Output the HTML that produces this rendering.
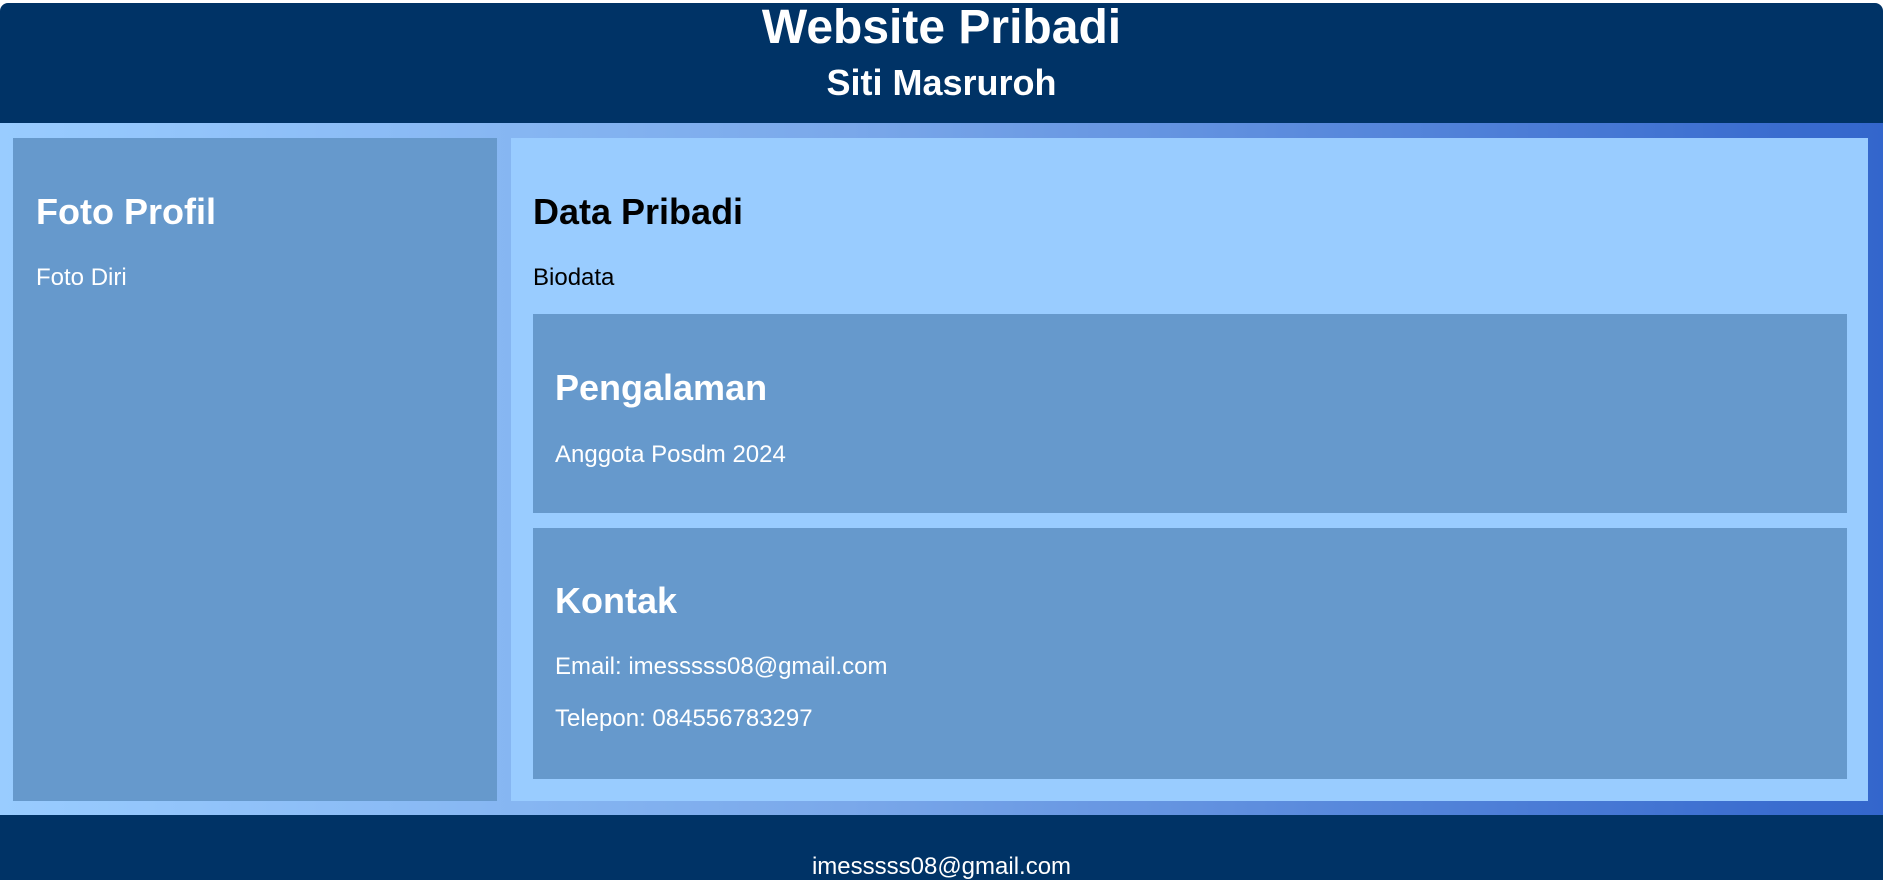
<!DOCTYPE html>
<html><head><meta charset="utf-8"><style>
html,body{margin:0;padding:0;width:1885px;height:880px;overflow:hidden;background:#fff;font-family:"Liberation Sans",Arial,sans-serif;}
div{position:absolute;box-sizing:border-box}
.t{white-space:nowrap;line-height:1;margin:0}
.b{font-weight:bold}
</style></head><body>
<div style="left:0;top:3px;width:1883px;height:121px;background:#003366;border-radius:8px 8px 0 0"></div>
<div style="left:0;top:123px;width:1883px;height:692px;background:linear-gradient(to right,#99ccff 0%,#7aa8ea 45%,#3366cc 100%)"></div>
<div style="left:13px;top:138px;width:484px;height:663px;background:#6699cc"></div>
<div style="left:511px;top:138px;width:1357px;height:663px;background:#99ccff"></div>
<div style="left:533px;top:314px;width:1314px;height:199px;background:#6699cc"></div>
<div style="left:533px;top:528px;width:1314px;height:251px;background:#6699cc"></div>
<div style="left:0;top:815px;width:1883px;height:65px;background:#003366"></div>

<div class="t b" style="left:0;width:1883px;text-align:center;top:4px;font-size:48px;color:#fff">Website Pribadi</div>
<div class="t b" style="left:0;width:1883px;text-align:center;top:65px;font-size:36px;color:#fff">Siti Masruroh</div>

<div class="t b" style="left:36px;top:194px;font-size:36px;color:#fff">Foto Profil</div>
<div class="t" style="left:36px;top:266px;font-size:24px;color:#fff">Foto Diri</div>

<div class="t b" style="left:533px;top:194px;font-size:36px;color:#000">Data Pribadi</div>
<div class="t" style="left:533px;top:266px;font-size:24px;color:#000">Biodata</div>

<div class="t b" style="left:555px;top:370px;font-size:36px;color:#fff">Pengalaman</div>
<div class="t" style="left:555px;top:443px;font-size:24px;color:#fff">Anggota Posdm 2024</div>

<div class="t b" style="left:555px;top:583px;font-size:36px;color:#fff">Kontak</div>
<div class="t" style="left:555px;top:655px;font-size:24px;color:#fff">Email: imesssss08@gmail.com</div>
<div class="t" style="left:555px;top:707px;font-size:24px;color:#fff">Telepon: 084556783297</div>

<div class="t" style="left:0;width:1883px;text-align:center;top:855px;font-size:24px;color:#fff">imesssss08@gmail.com</div>
</body></html>
